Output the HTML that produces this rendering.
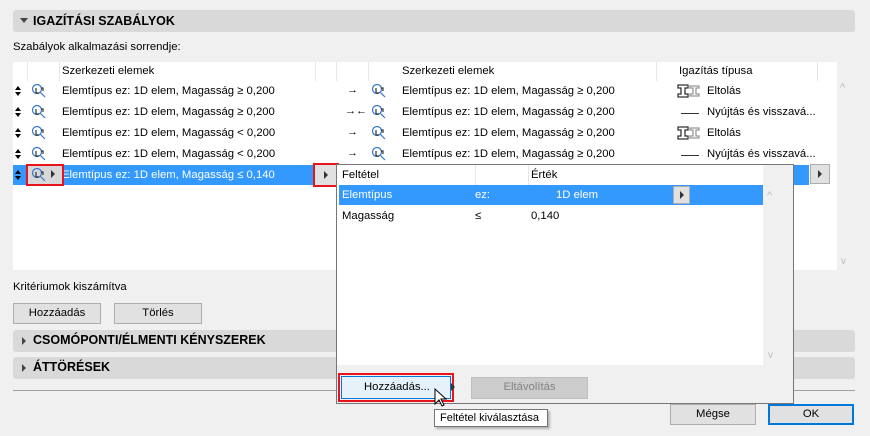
<!DOCTYPE html>
<html><head><meta charset="utf-8"><style>
*{margin:0;padding:0;box-sizing:border-box}
body{width:870px;height:436px;background:#f0f0f0;font-family:"Liberation Sans",sans-serif;font-size:11.3px;color:#000;position:relative;overflow:hidden}
.a{position:absolute;white-space:nowrap}
.bar{position:absolute;background:#d9d9d9;border-radius:3px;font-weight:bold;font-size:12.5px;line-height:21px;padding-left:20px}
.btn{position:absolute;background:#e1e1e1;border:1px solid #adadad;text-align:center;line-height:19px}
.vl{position:absolute;width:1px;background:#e6e6e6}
.mg{position:absolute;width:16px;height:16px}
</style></head><body>
<div class="bar" style="left:13px;top:10px;width:842px;height:22px;line-height:22px">IGAZÍTÁSI SZABÁLYOK</div>
<div class="a" style="left:20px;top:18px;width:0;height:0;border-left:4px solid transparent;border-right:4px solid transparent;border-top:5px solid #444"></div>
<div class="a" style="left:13px;top:41px">Szabályok alkalmazási sorrendje:</div>

<div class="a" style="left:13px;top:62px;width:824px;height:208px;background:#fff"></div>
<div class="vl" style="left:27px;top:62px;height:19px"></div>
<div class="vl" style="left:59px;top:62px;height:19px"></div>
<div class="vl" style="left:315px;top:62px;height:19px"></div>
<div class="vl" style="left:336px;top:62px;height:19px"></div>
<div class="vl" style="left:368px;top:62px;height:19px"></div>
<div class="vl" style="left:656px;top:62px;height:19px"></div>
<div class="vl" style="left:817px;top:62px;height:19px"></div>
<div class="a" style="left:62px;top:65px">Szerkezeti elemek</div>
<div class="a" style="left:402px;top:65px">Szerkezeti elemek</div>
<div class="a" style="left:679px;top:65px">Igazítás típusa</div>
<div class="a" style="left:840px;top:82px;color:#bbb;font-size:11px">^</div>
<div class="a" style="left:841px;top:256px;color:#bbb;font-size:10px">v</div>

<div class="a" style="left:13px;top:165px;width:323px;height:20px;background:#3399ff"></div>
<div class="a" style="left:793px;top:165px;width:16px;height:20px;background:#3399ff"></div>

<div id="rows"></div>
<script>
var r=[["≥","→"],["≥","→←"],["<","→"],["<","→"]];
var ic='<svg class="mg" viewBox="0 0 16 16" fill="none" stroke="#3377cc" stroke-width="1.2"><circle cx="6" cy="6" r="4.5"/><path d="M9.5 9.5 14 14"/><path d="M5 5v5h3M10 5h2v3" stroke="#333"/></svg>';
var ud='<svg width="6" height="10" viewBox="0 0 6 10"><path d="M3 0 6 4H0zM0 6h6L3 10z" fill="#000"/></svg>';
var h='';
for(var i=0;i<5;i++){var y=81+i*21;var sel=i==4;
h+='<div class="a" style="left:15px;top:'+(y+5)+'px;line-height:0">'+ud+'</div>';
h+='<div class="a" style="left:31px;top:'+(y+2)+'px">'+ic+'</div>';
h+='<div class="a" style="left:62px;top:'+(y+4)+'px;'+(sel?'color:#fff':'')+'">Elemtípus ez: 1D elem, Magasság '+(sel?'≤ 0,140':r[i][0]+' 0,200')+'</div>';
if(!sel){h+='<div class="a" style="left:'+(r[i][1].length>1?345:347)+'px;top:'+(y+3)+'px;font-size:11px">'+r[i][1]+'</div>';
h+='<div class="a" style="left:371px;top:'+(y+2)+'px">'+ic+'</div>';
h+='<div class="a" style="left:402px;top:'+(y+4)+'px">Elemtípus ez: 1D elem, Magasság ≥ 0,200</div>';
h+='<div class="a" style="left:707px;top:'+(y+4)+'px">'+(i%2?'Nyújtás és visszavá...':'Eltolás')+'</div>';
h+=i%2?'<div class="a" style="left:681px;top:'+(y+11)+'px;width:18px;height:1px;background:#333"></div>':'<svg class="a" style="left:677px;top:'+(y+3)+'px" width="26" height="14" viewBox="0 0 26 14" fill="none" stroke-width="1.3"><path d="M1 1h10v3H8v6h3v3H1v-3h3V4H1z" stroke="#333"/><path d="M13 2h9v2h-3v6h3v2h-9v-2h3V4h-3z" stroke="#999"/></svg>';}
}
document.getElementById('rows').innerHTML=h;
</script>
<div class="a" style="left:26px;top:164px;width:38px;height:22px;border:2px solid #e8141c;background:#d8d8d8"></div>
<div class="a" style="left:31px;top:167px"><svg width="16" height="16" viewBox="0 0 16 16" fill="none" stroke="#3377cc" stroke-width="1.2"><circle cx="6" cy="6" r="4.5"/><path d="M9.5 9.5 14 14"/><path d="M5 5v5h3M10 5h2v3" stroke="#333"/></svg></div>
<div class="a" style="left:51px;top:170px;border-top:4px solid transparent;border-bottom:4px solid transparent;border-left:4px solid #333"></div>
<div class="a" style="left:313px;top:163px;width:26px;height:24px;border:2px solid #e8141c;background:#e1e1e1"></div>
<div class="a" style="left:324px;top:171px;border-top:4px solid transparent;border-bottom:4px solid transparent;border-left:4px solid #333"></div>
<div class="a" style="left:810px;top:164px;width:20px;height:20px;border:1px solid #adadad;background:#e1e1e1"></div>
<div class="a" style="left:818px;top:170px;border-top:4px solid transparent;border-bottom:4px solid transparent;border-left:4px solid #333"></div>

<div class="a" style="left:13px;top:281px">Kritériumok kiszámítva</div>
<div class="btn" style="left:13px;top:303px;width:88px;height:21px">Hozzáadás</div>
<div class="btn" style="left:114px;top:303px;width:88px;height:21px">Törlés</div>
<div class="bar" style="left:13px;top:330px;width:842px;height:22px">CSOMÓPONTI/ÉLMENTI KÉNYSZEREK</div>
<div class="bar" style="left:13px;top:357px;width:842px;height:22px">ÁTTÖRÉSEK</div>
<div class="a" style="left:22px;top:337px;border-top:4px solid transparent;border-bottom:4px solid transparent;border-left:4px solid #444"></div>
<div class="a" style="left:22px;top:364px;border-top:4px solid transparent;border-bottom:4px solid transparent;border-left:4px solid #444"></div>
<div class="a" style="left:13px;top:390px;width:842px;height:1px;background:#a0a0a0"></div>
<div class="btn" style="left:670px;top:404px;width:86px;height:21px">Mégse</div>
<div class="btn" style="left:768px;top:404px;width:86px;height:21px;border:2px solid #0078d7;line-height:17px">OK</div>

<div class="a" style="left:336px;top:164px;width:458px;height:240px;background:#f0f0f0;border:1px solid #767676"></div>
<div class="a" style="left:337px;top:165px;width:426px;height:200px;background:#fff"></div>
<div class="vl" style="left:475px;top:165px;height:20px"></div>
<div class="vl" style="left:528px;top:165px;height:20px"></div>
<div class="a" style="left:342px;top:169px">Feltétel</div>
<div class="a" style="left:531px;top:169px">Érték</div>
<div class="a" style="left:339px;top:185px;width:424px;height:20px;background:#3399ff"></div>
<div class="a" style="left:342px;top:189px;color:#fff">Elemtípus</div>
<div class="a" style="left:475px;top:189px;color:#fff">ez:</div>
<div class="a" style="left:556px;top:189px;color:#fff">1D elem</div>
<div class="a" style="left:673px;top:186px;width:17px;height:18px;background:#e1e1e1;border:1px solid #adadad"></div>
<div class="a" style="left:680px;top:191px;border-top:4px solid transparent;border-bottom:4px solid transparent;border-left:4px solid #333"></div>
<div class="a" style="left:342px;top:210px">Magasság</div>
<div class="a" style="left:475px;top:210px">≤</div>
<div class="a" style="left:531px;top:210px">0,140</div>
<div class="a" style="left:767px;top:190px;color:#bbb;font-size:11px">^</div>
<div class="a" style="left:768px;top:350px;color:#bbb;font-size:10px">v</div>
<div class="a" style="left:338px;top:373px;width:116px;height:29px;border:2px solid #e8141c"></div>
<div class="a" style="left:341px;top:376px;width:110px;height:23px;background:#e5f1fb;border:1px solid #0078d7;line-height:21px;padding-left:22px">Hozzáadás...</div>
<div class="a" style="left:451px;top:383px;border-top:4px solid transparent;border-bottom:4px solid transparent;border-left:4px solid #333"></div>
<div class="btn" style="left:471px;top:377px;width:117px;height:22px;background:#cccccc;border-color:#bfbfbf;color:#838383">Eltávolítás</div>
<svg class="a" style="left:434px;top:388px" width="14" height="20" viewBox="0 0 14 20"><path d="M1 1v15l4-4 3 6 2-1-3-6h5z" fill="#fff" stroke="#000"/></svg>
<div class="a" style="left:434px;top:409px;width:114px;height:18px;background:#fff;border:1px solid #767676;line-height:16px;padding-left:5px;font-size:11px;box-shadow:2px 2px 2px rgba(0,0,0,.25)">Feltétel kiválasztása</div>
</body></html>
